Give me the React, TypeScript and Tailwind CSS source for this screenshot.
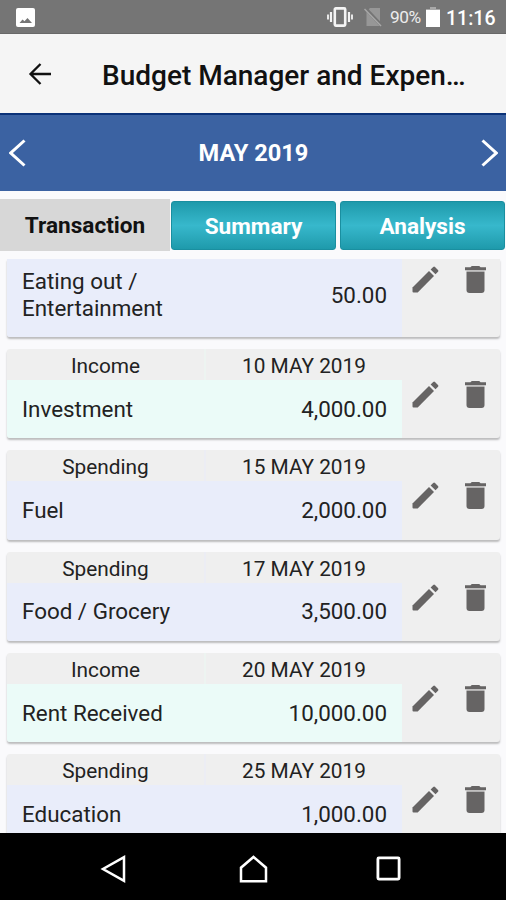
type Entry = {
  type: "Income" | "Spending";
  date: string;
  category: string;
  amount: string;
};

const entries: Entry[] = [
  { type: "Income", date: "10 MAY 2019", category: "Investment", amount: "4,000.00" },
  { type: "Spending", date: "15 MAY 2019", category: "Fuel", amount: "2,000.00" },
  { type: "Spending", date: "17 MAY 2019", category: "Food / Grocery", amount: "3,500.00" },
  { type: "Income", date: "20 MAY 2019", category: "Rent Received", amount: "10,000.00" },
  { type: "Spending", date: "25 MAY 2019", category: "Education", amount: "1,000.00" },
];

const StatusBar = () => (
  <div className="flex h-[34px] shrink-0 items-center border-b border-[#686868] bg-[#757575] pl-4 pr-[11px] pt-px text-white">
    <svg className="h-[19px] w-[19px]" viewBox="0 0 19 19">
      <rect width="19" height="19" rx="2" fill="#fff" />
      <path d="M3.5 15l3-3.5 2 1.8 3-3.3 4.5 5z" fill="#757575" />
    </svg>
    <svg className="ml-auto h-5 w-[26px]" viewBox="0 0 26 20" fill="none" stroke="#f4f4f4">
      <rect x="7.8" y="1.4" width="10.4" height="17.2" rx="1" strokeWidth="2.6" />
      <path d="M4 5v10M22 5v10" strokeWidth="2.2" />
      <path d="M1 7.5v5M25 7.5v5" strokeWidth="1.8" />
    </svg>
    <svg className="ml-[11px] h-5 w-[18px]" viewBox="0 0 18 20">
      <path d="M6 1H16v18H2.5V4.5z" fill="#979797" />
      <path d="M1 1l17 18" stroke="#757575" strokeWidth="3.5" />
      <path d="M0.5 2l16.5 17" stroke="#a8a8a8" strokeWidth="1.5" />
    </svg>
    <span className="ml-[8px] w-[33px] whitespace-nowrap pt-[2px] text-[17.3px] leading-none tracking-[-0.5px] text-[#ececec]">
      90%
    </span>
    <svg className="ml-[3px] h-[20px] w-[14px]" viewBox="0 0 14 20">
      <path d="M0 2h14v18H0z" fill="#fff" />
      <path d="M4 0h6v2h4v1H0V2h4z" fill="#a8a8a8" />
    </svg>
    <span className="ml-[6px] w-[49px] whitespace-nowrap pt-[3px] text-[19.5px] font-medium leading-none">
      11:16
    </span>
  </div>
);

const Header = () => (
  <div className="flex h-[79px] shrink-0 items-center bg-[#f5f5f5] pl-[28px]">
    <svg className="h-[22px] w-[23px]" viewBox="0 0 23 22" fill="none" stroke="#111" strokeWidth="2.3">
      <path d="M23 11H2.5M12.5 1L2.5 11l10 10" />
    </svg>
    <h1 className="ml-[51px] whitespace-nowrap pt-[4px] text-[28px] font-medium text-[#111]">
      Budget Manager and Expen…
    </h1>
  </div>
);

const MonthBar = () => (
  <div className="flex h-[78px] shrink-0 items-center justify-between border-t-2 border-[#0b3278] bg-[#3b62a2] pl-[9px] pr-[8px]">
    <svg className="h-[28px] w-[17px]" viewBox="0 0 17 28" fill="none" stroke="#fff" strokeWidth="3">
      <path d="M15.5 1.5L1.8 14l13.7 12.5" />
    </svg>
    <p className="pt-[2px] text-[23.6px] font-bold text-white">MAY 2019</p>
    <svg className="h-[28px] w-[17px]" viewBox="0 0 17 28" fill="none" stroke="#fff" strokeWidth="3">
      <path d="M1.5 1.5L15.2 14 1.5 26.5" />
    </svg>
  </div>
);

const Tabs = () => (
  <div className="flex h-[68px] shrink-0 pt-[8px] text-[22.6px] font-bold text-white">
    <div className="flex h-[52px] w-[170px] items-center justify-center bg-[#d7d7d7] pt-[2px] text-[#111]">
      Transaction
    </div>
    <div className="ml-px mt-[2px] flex h-[49px] w-[165px] items-center justify-center rounded-[3px] border border-[#1a8fa0] bg-gradient-to-b from-[#1e9aab] via-[#37b8cc] to-[#1e9aab] pt-[2px]">
      Summary
    </div>
    <div className="ml-1 mt-[2px] flex h-[49px] w-[165px] items-center justify-center rounded-[3px] border border-[#1a8fa0] bg-gradient-to-b from-[#1e9aab] via-[#37b8cc] to-[#1e9aab] pt-[2px]">
      Analysis
    </div>
  </div>
);

const Actions = () => (
  <div className="flex w-[98px] pl-[10px]">
    <svg className="size-[27px]" viewBox="0 0 27 27" fill="#666464">
      <path d="M.5 21.6 17 5.1l5 5L5.7 26.5H1.5a1 1 0 0 1-1-1z" />
      <path d="M18.6 3.5 21.2 .9q.9-.8 1.8 0L26 3.9q.9.9 0 1.8l-2.5 2.6z" />
    </svg>
    <svg className="ml-[26px] h-[27px] w-[21px]" viewBox="0 0 21 27" fill="#666464">
      <path d="M0 1.3h5.4L6.8 0h7.4l1.4 1.3H21v2.9H0z" />
      <path d="M1.5 4.2h18v1.5h-18z" fill="#bdbcbc" />
      <path d="M1.5 5.7h18v18.2a3 3 0 0 1-3 3h-12a3 3 0 0 1-3-3z" />
    </svg>
  </div>
);

const EntryCard = ({ entry }: { entry: Entry }) => {
  const income = entry.type === "Income";
  return (
    <div className="mb-[12px] flex h-[89.3px] shrink-0 rounded-[3px] bg-[#efefef] shadow-[0_2px_2px_rgba(0,0,0,0.25)]">
      <div className="flex w-[395px] flex-col">
        <div className="flex h-[31px] items-center text-center text-[20.8px]">
          <p className={`h-full w-[199px] border-r-2 pt-[4px] ${income ? "border-[#edf4f1]" : "border-[#ecedf4]"}`}>
            {entry.type}
          </p>
          <p className="h-full w-[196px] pt-[4px]">{entry.date}</p>
        </div>
        <div
          className={`flex flex-1 items-center justify-between rounded-bl-[3px] px-[15px] ${
            income ? "bg-[#ebfbf8]" : "bg-[#e9edfa]"
          }`}
        >
          <p>{entry.category}</p>
          <p>{entry.amount}</p>
        </div>
      </div>
      <div className="pt-[32px]">
        <Actions />
      </div>
    </div>
  );
};

const NavBar = () => (
  <div className="flex h-[67px] shrink-0 items-center bg-black pl-[100px] pt-1">
    <svg className="h-7 w-[26px]" viewBox="0 0 26 28" fill="none" stroke="#fff" strokeWidth="2.5">
      <path d="M24 2.2v23.6L3 14z" />
    </svg>
    <svg className="ml-[113px] h-7 w-[29px]" viewBox="0 0 29 28" fill="none" stroke="#fff" strokeWidth="2.5">
      <path d="M2 26.2V12.7L14.5 2 27 12.7v13.5z" />
    </svg>
    <svg className="ml-[108px] size-[25px]" viewBox="0 0 25 25" fill="none" stroke="#fff" strokeWidth="2.8">
      <rect x="1.9" y="1.9" width="21.2" height="21.2" rx="1" />
    </svg>
  </div>
);

const App = () => {
  return (
    <div className="flex h-[900px] w-[506px] flex-col overflow-hidden bg-[#fafafc] font-['Roboto',sans-serif]">
      <StatusBar />
      <Header />
      <MonthBar />
      <Tabs />
      <div className="flex min-h-0 flex-1 flex-col overflow-hidden pl-[7px] pr-[6px] text-[22.4px] leading-[27px] text-[#222]">
        {/* partly scrolled out, only its body row is left in view */}
        <div className="mb-[12px] flex h-[78px] shrink-0 rounded-b-[3px] bg-[#efefef] shadow-[0_2px_2px_rgba(0,0,0,0.25)]">
          <div className="flex w-[395px] items-center justify-between rounded-bl-[3px] bg-[#e9edfa] px-[15px]">
            <p className="pb-[6px]">
              Eating out /<br />
              Entertainment
            </p>
            <p className="pb-[6px]">50.00</p>
          </div>
          <div className="pt-[7px]">
            <Actions />
          </div>
        </div>
        {entries.map((entry) => (
          <EntryCard key={entry.date} entry={entry} />
        ))}
      </div>
      <NavBar />
    </div>
  );
};

export default App;
